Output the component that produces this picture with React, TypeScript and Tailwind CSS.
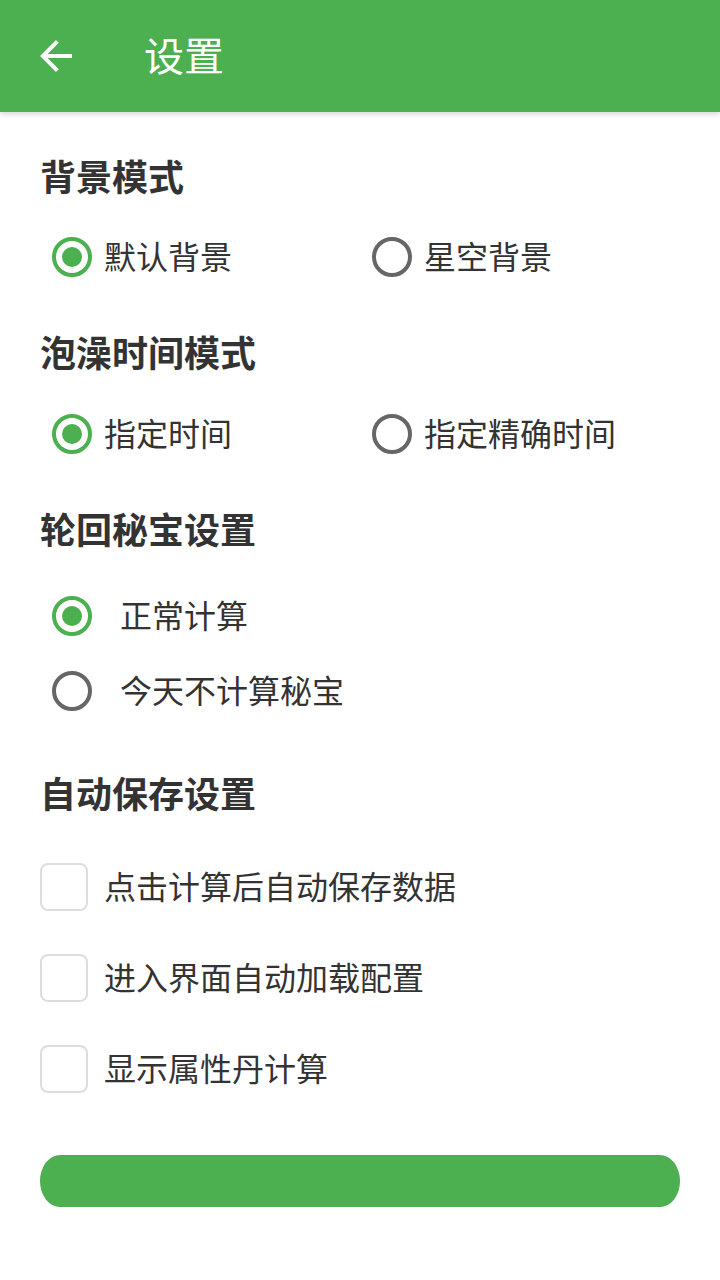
import { useState } from "react";

const font = { fontFamily: '"Noto Sans CJK SC", "Noto Sans", sans-serif' };

function Radio({ checked }: { checked: boolean }) {
  return (
    <span
      className={`flex h-10 w-10 shrink-0 items-center justify-center rounded-full border-4 ${
        checked ? "border-[#4caf50]" : "border-[#666666]"
      }`}
    >
      {checked && <span className="h-5 w-5 rounded-full bg-[#4caf50]" />}
    </span>
  );
}

function SectionTitle({ children, className = "" }: { children: string; className?: string }) {
  return (
    <div className={`h-12 text-[36px] font-bold leading-[42px] text-[#333333] ${className}`}>
      {children}
    </div>
  );
}

export default function App() {
  const [bg, setBg] = useState(0);
  const [bath, setBath] = useState(0);
  const [treasure, setTreasure] = useState(0);
  const [checks, setChecks] = useState([false, false, false]);

  const toggle = (i: number) =>
    setChecks((prev) => prev.map((v, j) => (j === i ? !v : v)));

  return (
    <div className="min-h-[1280px] w-[720px] bg-white" style={font}>
      {/* Toolbar */}
      <div className="flex h-[112px] items-center bg-[#4caf50] shadow-[0_2px_6px_rgba(0,0,0,0.18)]">
        <button className="ml-8 flex h-12 w-12 items-center justify-center">
          <svg viewBox="0 0 24 24" className="h-12 w-12" fill="#ffffff">
            <path d="M20 11H7.83l5.59-5.59L12 4l-8 8 8 8 1.41-1.41L7.83 13H20v-2z" />
          </svg>
        </button>
        <div className="ml-[64px] pb-1 text-[40px] leading-none text-white">设置</div>
      </div>

      <div className="px-10 pt-[42px]">
        <SectionTitle>背景模式</SectionTitle>
        <div className="mt-[27px] flex h-14">
          {["默认背景", "星空背景"].map((label, i) => (
            <div
              key={label}
              className="flex w-[320px] cursor-pointer items-center pl-3"
              onClick={() => setBg(i)}
            >
              <Radio checked={bg === i} />
              <span className="ml-[12px] pb-1 text-[32px] text-[#333333]">{label}</span>
            </div>
          ))}
        </div>

        <SectionTitle className="mt-[45px]">泡澡时间模式</SectionTitle>
        <div className="mt-[28px] flex h-14">
          {["指定时间", "指定精确时间"].map((label, i) => (
            <div
              key={label}
              className="flex w-[320px] cursor-pointer items-center pl-3"
              onClick={() => setBath(i)}
            >
              <Radio checked={bath === i} />
              <span className="ml-[12px] pb-1 text-[32px] text-[#333333]">{label}</span>
            </div>
          ))}
        </div>

        <SectionTitle className="mt-[45px]">轮回秘宝设置</SectionTitle>
        <div className="mt-[23px] flex flex-col">
          {["正常计算", "今天不计算秘宝"].map((label, i) => (
            <div
              key={label}
              className="flex h-[75px] cursor-pointer items-center pl-3"
              onClick={() => setTreasure(i)}
            >
              <Radio checked={treasure === i} />
              <span className="ml-[28px] pb-1 text-[32px] text-[#333333]">{label}</span>
            </div>
          ))}
        </div>

        <SectionTitle className="mt-[43px]">自动保存设置</SectionTitle>
        <div className="mt-[22px] flex flex-col">
          {["点击计算后自动保存数据", "进入界面自动加载配置", "显示属性丹计算"].map((label, i) => (
            <div
              key={label}
              className="flex h-[91px] cursor-pointer items-center"
              onClick={() => toggle(i)}
            >
              <span
                className={`flex h-12 w-12 shrink-0 items-center justify-center rounded-[8px] border-2 ${
                  checks[i] ? "border-[#4caf50] bg-[#4caf50]" : "border-[#dddddd] bg-white"
                }`}
              >
                {checks[i] && (
                  <svg viewBox="0 0 24 24" className="h-8 w-8" fill="none" stroke="#fff" strokeWidth={3}>
                    <path d="M5 12l5 5 9-10" />
                  </svg>
                )}
              </span>
              <span className="ml-[16px] pb-1 text-[32px] text-[#333333]">{label}</span>
            </div>
          ))}
        </div>

        <button className="mt-[41px] h-[52px] w-full rounded-[20px_/_26px] bg-[#4caf50]" />
      </div>
    </div>
  );
}
